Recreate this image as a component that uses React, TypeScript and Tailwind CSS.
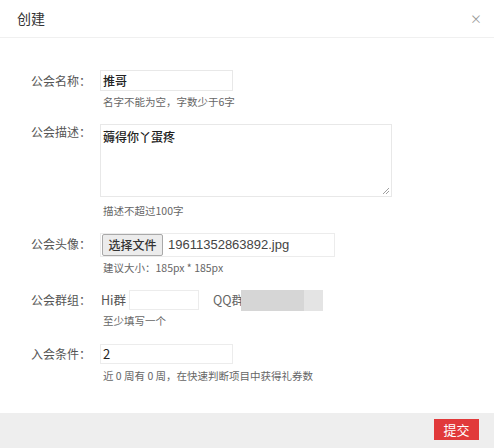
import React from "react";

const font = { fontFamily: '"Noto Sans CJK SC", "Noto Sans", sans-serif' };

function Label({ children, lh, pt = 0 }: { children: React.ReactNode; lh: string; pt?: number }) {
  return (
    <div className={`w-[91px] shrink-0 text-right text-[12px] text-[#555] ${lh}`} style={{ paddingTop: pt }}>
      {children}
    </div>
  );
}

function Hint({ children, mt }: { children: React.ReactNode; mt: string }) {
  return <div className={`pl-[3px] text-[10.5px] leading-[11px] text-[#666] ${mt}`}>{children}</div>;
}

export default function App() {
  return (
    <div className="w-[494px] h-[448px] bg-white flex flex-col overflow-hidden" style={font}>
      <div className="h-[38px] shrink-0 flex items-center justify-between pl-[17px] pr-[12px] border-b border-[#f0f0f0]">
        <span className="text-[14px] text-[#333]">创建</span>
        <span className="text-[12px] text-[#999] leading-none">×</span>
      </div>
      <div className="flex-1 pt-[32px]">
        {/* Row 1 */}
        <div className="flex">
          <Label lh="leading-[21px]">公会名称：</Label>
          <div className="ml-[9px]">
            <div className="w-[133px] h-[21px] border border-[#e8e8e8] flex items-center pl-[2px] text-[12px] font-medium text-[#222]">推哥</div>
            <Hint mt="mt-[5px]">名字不能为空，字数少于6字</Hint>
          </div>
        </div>
        {/* Row 2 */}
        <div className="flex mt-[17px]">
          <Label lh="leading-[16px]">公会描述：</Label>
          <div className="ml-[9px]">
            <div className="relative w-[292px] h-[73px] border border-[#e8e8e8] pl-[2px] pt-[5px] text-[12px] font-medium text-[#222] leading-[14px]">
              薅得你丫蛋疼
              <svg className="absolute right-[1px] bottom-[1px]" width="8" height="8" viewBox="0 0 8 8">
                <line x1="1" y1="7" x2="7" y2="1" stroke="#888" strokeWidth="0.8" />
                <line x1="4" y1="7" x2="7" y2="4" stroke="#888" strokeWidth="0.8" />
              </svg>
            </div>
            <Hint mt="mt-[8px]">描述不超过100字</Hint>
          </div>
        </div>
        {/* Row 3 */}
        <div className="flex mt-[17px]">
          <Label lh="leading-[21px]">公会头像：</Label>
          <div className="ml-[9px]">
            <div className="w-[235px] h-[24px] border border-[#ececec] flex items-center pl-[1px]">
              <div className="h-[22px] w-[61px] border border-[#a9a9a9] bg-[#ececec] rounded-[2px] flex items-center justify-center text-[12px] font-medium text-[#333]">选择文件</div>
              <span className="ml-[5px] text-[13px] text-[#444]" style={{ fontFamily: '"Liberation Sans", Arial, sans-serif' }}>19611352863892.jpg</span>
            </div>
            <Hint mt="mt-[5px]">建议大小：185px * 185px</Hint>
          </div>
        </div>
        {/* Row 4 */}
        <div className="flex mt-[17px]">
          <Label lh="leading-[20px]">公会群组：</Label>
          <div className="ml-[9px]">
            <div className="flex items-center h-[20px]">
              <span className="pl-[1px] text-[12.5px] text-[#555]">Hi群</span>
              <div className="ml-[3px] w-[70px] h-[20px] border border-[#ececec]" />
              <span className="ml-[14px] text-[12.5px] text-[#666]">QQ群</span>
              <div className="-ml-[3px] w-[82px] h-[21px] flex">
                <div className="w-[63px] h-full bg-[#d6d6d6]" />
                <div className="flex-1 h-full bg-[#e4e4e4]" />
              </div>
            </div>
            <Hint mt="mt-[5px]">至少填写一个</Hint>
          </div>
        </div>
        {/* Row 5 */}
        <div className="flex mt-[18px]">
          <Label lh="leading-[20px]">入会条件：</Label>
          <div className="ml-[9px]">
            <div className="w-[133px] h-[20px] border border-[#ececec] flex items-center pl-[2px] text-[13px] text-[#222]">2</div>
            <Hint mt="mt-[6px]">近 0 周有 0 周，在快速判断项目中获得礼券数</Hint>
          </div>
        </div>
      </div>
      <div className="h-[35px] shrink-0 bg-[#eeeeee] flex justify-end pr-[15px] pt-[6px]">
        <div className="w-[45px] h-[21px] bg-[#e1393a] text-white text-[13px] flex items-center justify-center">提交</div>
      </div>
    </div>
  );
}
